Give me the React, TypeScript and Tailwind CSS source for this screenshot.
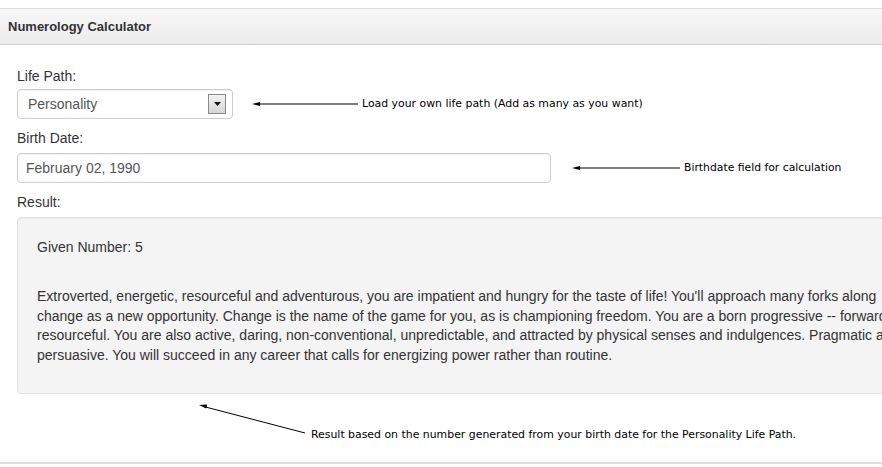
import React from "react";

function ArrowLeft({ width }: { width: number }) {
  return (
    <svg width={width} height={8} viewBox={`0 0 ${width} 8`} className="block shrink-0">
      <line x1={6} y1={4} x2={width} y2={4} stroke="#000" strokeWidth={1} />
      <polygon points={`0,4 8,2 8,6`} fill="#000" />
    </svg>
  );
}

export default function App() {
  const sans = { fontFamily: '"Liberation Sans", Arial, sans-serif' };
  const note = { fontFamily: '"DejaVu Sans", Verdana, sans-serif' };
  return (
    <div className="w-[882px] h-[467px] overflow-hidden bg-white pt-[8px]" style={sans}>
      <div className="w-[1100px] border-t border-[#dcdcdc] border-b-2 border-b-[#dedede]">
        <div className="h-[36px] flex items-center px-[8px] bg-gradient-to-b from-[#f7f7f7] to-[#ececec] border-b border-[#cfcfcf]">
          <span className="text-[13px] font-bold text-[#333]">Numerology Calculator</span>
        </div>
        <div className="pl-[17px] pt-[21px]">
          <div className="h-[20px] leading-[20px] text-[14px] text-[#333]">Life Path:</div>
          <div className="mt-[3px] flex items-center">
            <div className="w-[216px] h-[30px] border border-[#ccc] rounded-[4px] flex items-center pl-[10px] pr-[6px] shadow-[inset_0_1px_1px_rgba(0,0,0,0.06)]">
              <span className="text-[14px] text-[#555] flex-1">Personality</span>
              <div className="w-[18px] h-[20px] border border-[#8a8a8a] bg-gradient-to-b from-[#f2f2f2] to-[#d6d6d6] flex items-center justify-center">
                <svg width="7" height="4" viewBox="0 0 7 4" className="block">
                  <polygon points="0,0 7,0 3.5,4" fill="#111" />
                </svg>
              </div>
            </div>
            <div className="ml-[19px]">
              <ArrowLeft width={106} />
            </div>
            <span className="ml-[4px] text-[10.9px] text-black leading-none" style={note}>
              Load your own life path (Add as many as you want)
            </span>
          </div>
          <div className="mt-[9px] h-[20px] leading-[20px] text-[14px] text-[#333]">Birth Date:</div>
          <div className="mt-[5px] flex items-center">
            <div className="w-[534px] h-[30px] border border-[#ccc] rounded-[4px] flex items-center pl-[8px] shadow-[inset_0_1px_1px_rgba(0,0,0,0.06)]">
              <span className="text-[14px] text-[#555]">February 02, 1990</span>
            </div>
            <div className="ml-[21px]">
              <ArrowLeft width={108} />
            </div>
            <span className="ml-[4px] text-[10.8px] text-black leading-none" style={note}>
              Birthdate field for calculation
            </span>
          </div>
          <div className="mt-[9px] h-[20px] leading-[20px] text-[14px] text-[#333]">Result:</div>
          <div className="mt-[5px] w-[1000px] border border-[#e3e3e3] rounded-[4px] bg-[#f4f4f4] pl-[19px] pt-[19px] pb-[28px] text-[14px] text-[#333] shadow-[inset_0_1px_1px_rgba(0,0,0,0.05)]">
            <p className="leading-[20px]">Given Number: 5</p>
            <div className="mt-[30px] leading-[19.5px] whitespace-nowrap">
              <div>Extroverted, energetic, resourceful and adventurous, you are impatient and hungry for the taste of life! You'll approach many forks along</div>
              <div>change as a new opportunity. Change is the name of the game for you, as is championing freedom. You are a born progressive -- forward-thinking and</div>
              <div>resourceful. You are also active, daring, non-conventional, unpredictable, and attracted by physical senses and indulgences. Pragmatic and</div>
              <div>persuasive. You will succeed in any career that calls for energizing power rather than routine.</div>
            </div>
          </div>
          <div className="h-[68px] flex items-start pl-[181px]">
            <svg width={110} height={38} viewBox="0 0 110 38" className="block mt-[6px] shrink-0">
              <line x1={6} y1={6.6} x2={107} y2={33} stroke="#000" strokeWidth={1} />
              <polygon points="1,5 9.2,4.6 8.2,8.4" fill="#000" />
            </svg>
            <span className="ml-[3px] mt-[36px] text-[10.9px] text-black leading-none" style={note}>
              Result based on the number generated from your birth date for the Personality Life Path.
            </span>
          </div>
        </div>
      </div>
    </div>
  );
}
